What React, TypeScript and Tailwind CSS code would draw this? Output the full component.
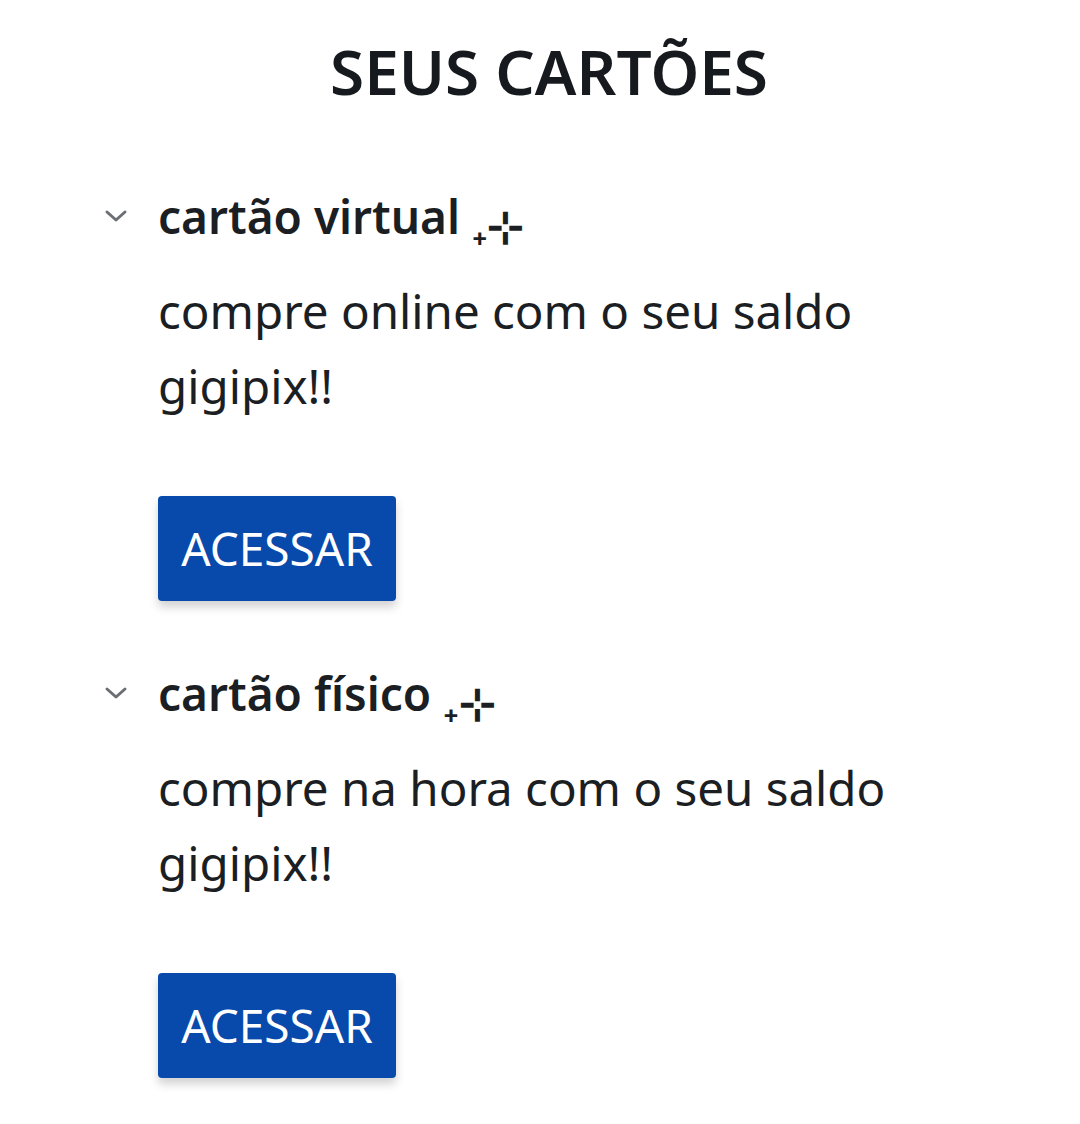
import React from 'react';

const CARDS = [
  { title: 'cartão virtual', text: 'compre online com o seu saldo gigipix!!' },
  { title: 'cartão físico', text: 'compre na hora com o seu saldo gigipix!!' },
];

const Chevron = () => (
  <svg viewBox="0 0 24 14" className="w-[24px] h-[14px]" fill="none" stroke="#6b6e73" strokeWidth="3" strokeLinecap="round" strokeLinejoin="round">
    <path d="M3 3l9 8 9-8" />
  </svg>
);

const CardItem: React.FC<{ title: string; text: string }> = ({ title, text }) => (
  <div className="flex">
    <div className="w-[158px] shrink-0 flex justify-end pr-[30px] pt-[21px]">
      <Chevron />
    </div>
    <div className="flex-1 pr-[120px]">
      <div className="text-[46px] leading-[56px] font-semibold text-[#1b1e22]">
        {title} <span className="text-[44px] font-semibold align-[-8px]">₊⊹</span>
      </div>
      <p className="mt-[20px] text-[47.5px] leading-[75px] text-[#1b1e22]">{text}</p>
      <button className="mt-[73px] w-[238px] h-[105px] bg-[#0849ac] rounded-[4px] text-white text-[46px] shadow-[0_6px_10px_rgba(0,0,0,0.18)]">
        ACESSAR
      </button>
    </div>
  </div>
);

export default function App() {
  return (
    <div className="w-[1080px] min-h-[1124px] bg-white font-['Noto_Sans',sans-serif]">
      <h1 className="pt-[33px] text-center text-[62px] leading-[76px] font-semibold text-[#16191d] pl-[18px]">SEUS CARTÕES</h1>
      <div className="mt-[79px] flex flex-col gap-[64px]">
        {CARDS.map((c) => (
          <CardItem key={c.title} title={c.title} text={c.text} />
        ))}
      </div>
    </div>
  );
}
